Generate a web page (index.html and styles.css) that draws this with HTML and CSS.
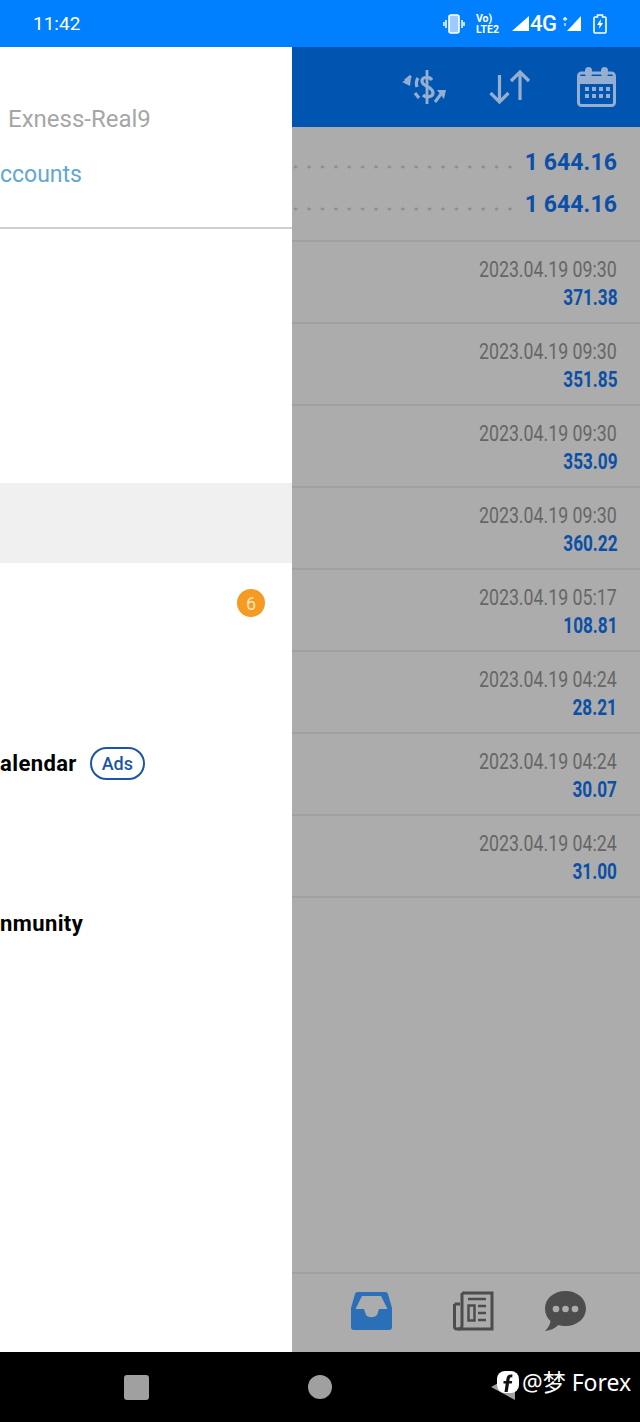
FILE: index.html
```html
<!DOCTYPE html>
<html lang="en">
<head>
<meta charset="utf-8">
<title>History</title>
<link rel="stylesheet" href="styles.css">
</head>
<body>
<div class="phone">
  <header class="status">
    <span class="clock">11:42</span>
    <div class="status-icons">
      <svg class="i-vibrate" viewBox="0 0 22 20"><rect x="6" y="1" width="10" height="18" rx="2" fill="#9ccbff" stroke="#fff" stroke-width="1.6"/><path d="M3 6v8M1 8v4M19 6v8M21 8v4" stroke="#fff" stroke-width="1.5" fill="none"/></svg>
      <div class="volte"><span>Vo)</span><span>LTE2</span></div>
      <svg class="i-signal" viewBox="0 0 17 15"><path d="M17 0V15H0Z" fill="#fff"/></svg>
      <span class="net">4G</span>
      <svg class="i-signal2" viewBox="0 0 19 15"><path d="M18 0V15H4Z" fill="#fff"/><path d="M2 2v3M0 3.500l2-2 2 2M2 10V7" stroke="#fff" stroke-width="1.2" fill="none"/></svg>
      <svg class="i-battery" viewBox="0 0 14 20"><path d="M4.500 1h5v2h2.500a1 1 0 0 1 1 1v14a1 1 0 0 1-1 1H2a1 1 0 0 1-1-1V4a1 1 0 0 1 1-1h2.500z" fill="none" stroke="#fff" stroke-width="1.6"/><path d="M8 5 4 11h2.500L6 15l4-6H7.500z" fill="#fff"/></svg>
    </div>
  </header>

  <div class="screen">
    <div class="main">
      <div class="appbar">
        <svg class="i-dollar" viewBox="0 0 44 34" fill="none" stroke="#96aecf" stroke-width="3.200">
          <path d="M30 10C27 6 20 7 20 11c0 6 11 5 11 12 0 4-7 5-10 2"/>
          <path d="M25 0v34" stroke-width="2.800"/>
          <path d="M16 8c-2 3-2 6-1 9M13 23l4 5"/>
          <path d="M9 6 3 11" stroke-width="3"/>
          <path d="M0 12l8 4 1-8z" fill="#96aecf" stroke="none"/>
          <path d="M33 32l6-8" stroke-width="3"/>
          <path d="M44 20h-9l7 9z" fill="#96aecf" stroke="none"/>
        </svg>
        <svg class="i-sort" viewBox="0 0 42 34" fill="none" stroke="#96aecf" stroke-width="3.200">
          <path d="M10.500 5v27M1.500 23l9 9 9-9"/>
          <path d="M31 30V2M22 11l9-9 9 9"/>
        </svg>
        <svg class="i-cal" viewBox="0 0 39 40">
          <rect x="1.500" y="6" width="36" height="32.500" rx="3" fill="none" stroke="#96aecf" stroke-width="3"/>
          <path d="M1.500 9h36v8h-36z" fill="#96aecf"/>
          <rect x="8" y="0" width="7" height="10" rx="3.500" fill="#96aecf"/>
          <rect x="24" y="0" width="7" height="10" rx="3.500" fill="#96aecf"/>
          <g fill="#96aecf"><rect x="8" y="20" width="4" height="4"/><rect x="15" y="20" width="4" height="4"/><rect x="22" y="20" width="4" height="4"/><rect x="29" y="20" width="4" height="4"/><rect x="8" y="27" width="4" height="4"/><rect x="15" y="27" width="4" height="4"/><rect x="22" y="27" width="4" height="4"/><rect x="29" y="27" width="4" height="4"/></g>
        </svg>
      </div>
      <section class="summary">
        <div class="sum-row"><span class="leader"></span><span class="sum-value">1 644.16</span></div>
        <div class="sum-row"><span class="leader"></span><span class="sum-value">1 644.16</span></div>
      </section>
      <ul class="deals">
        <li class="deal"><span class="deal-date">2023.04.19 09:30</span><span class="deal-amount">371.38</span></li>
        <li class="deal"><span class="deal-date">2023.04.19 09:30</span><span class="deal-amount">351.85</span></li>
        <li class="deal"><span class="deal-date">2023.04.19 09:30</span><span class="deal-amount">353.09</span></li>
        <li class="deal"><span class="deal-date">2023.04.19 09:30</span><span class="deal-amount">360.22</span></li>
        <li class="deal"><span class="deal-date">2023.04.19 05:17</span><span class="deal-amount">108.81</span></li>
        <li class="deal"><span class="deal-date">2023.04.19 04:24</span><span class="deal-amount">28.21</span></li>
        <li class="deal"><span class="deal-date">2023.04.19 04:24</span><span class="deal-amount">30.07</span></li>
        <li class="deal"><span class="deal-date">2023.04.19 04:24</span><span class="deal-amount">31.00</span></li>
      </ul>
      <nav class="tabs">
        <svg class="tab-icon" viewBox="0 0 41 38"><path fill-rule="evenodd" d="M7 0h27a3 3 0 0 1 3 2l4 14v19a3 3 0 0 1-3 3H3a3 3 0 0 1-3-3V16L4 2a3 3 0 0 1 3-2zM11 4 4.500 17H13l2 6c3 3 8 3 11 0l2-6h8.500L30 4z" fill="#2a6fb8"/></svg>
        <svg class="tab-icon tab-news" viewBox="0 0 41 40" fill="none" stroke="#4d4d4d" stroke-width="3">
          <path d="M9 2h30v36H4a2.500 2.500 0 0 1-2.500-2.500V13"/><path d="M9 2v33c0 2-2 3-4 3M1.500 13H7"/>
          <path d="M15 8h18" stroke-width="2.500"/>
          <rect x="15.500" y="14.500" width="6" height="15" stroke-width="2.500"/>
          <path d="M25 15h8M25 22h8M25 29h8" stroke-width="2.500"/>
        </svg>
        <svg class="tab-icon tab-chat" viewBox="0 0 41 40"><path d="M20.500 0C32 0 41 7.500 41 17.500S32 35 20.500 35c-2.500 0-5-.4-7-1C10 37.500 5 39.500 0 40c3-3 5-6 5.500-10C2 27 0 22.500 0 17.500 0 7.500 9 0 20.500 0z" fill="#4d4d4d"/><circle cx="11" cy="18" r="3.300" fill="#acacac"/><circle cx="20.500" cy="18" r="3.300" fill="#acacac"/><circle cx="30" cy="18" r="3.300" fill="#acacac"/></svg>
      </nav>
    </div>

    <aside class="drawer">
      <div class="drawer-head">
        <p class="server">Exness-Real9</p>
        <p class="accounts">ccounts</p>
      </div>
      <ul class="menu">
        <li class="menu-item"></li>
        <li class="menu-item"></li>
        <li class="menu-item"></li>
        <li class="menu-item is-active"></li>
        <li class="menu-item"><span class="badge">6</span></li>
        <li class="menu-item"></li>
        <li class="menu-item"><span class="menu-label">alendar</span><span class="ads">Ads</span></li>
        <li class="menu-item"></li>
        <li class="menu-item"><span class="menu-label">nmunity</span></li>
      </ul>
    </aside>
  </div>

  <footer class="navbar">
    <span class="nav-square"></span>
    <span class="nav-circle"></span>
    <svg class="nav-back" viewBox="0 0 24 26"><path d="M0 13 24 0v26z" fill="#a0a0a0"/></svg>
    <div class="watermark">
      <svg class="fb" viewBox="0 0 22 22"><rect width="22" height="22" rx="8" fill="#fff"/><path d="M15.500 3.500c-3.500-.6-5.500 1-6 4l-.4 2.500H6.500v2.500h2.200L7.500 21h3.200l1.300-8.500h2.800l.4-2.500h-2.800l.3-2c.2-1.300 1-1.800 2.500-1.600z" fill="#111"/></svg>
      <span>@梦 Forex</span>
    </div>
  </footer>
</div>
</body>
</html>
```

FILE: styles.css
```css
* { box-sizing: border-box; }
html, body { margin: 0; padding: 0; }
body { font-family: Roboto, "Noto Sans CJK SC", sans-serif; background: #000; }
ul { list-style: none; margin: 0; padding: 0; }
p { margin: 0; }
svg { display: block; flex: none; }

.phone { width: 640px; height: 1422px; display: flex; flex-direction: column; overflow: hidden; }

.status { height: 47px; flex: none; background: #0080ff; color: #fff; display: flex; align-items: center; justify-content: space-between; padding: 0 33px; }
.clock { font-size: 19px; line-height: 47px; }
.status-icons { display: flex; align-items: center; }
.i-vibrate { width: 22px; height: 20px; margin-right: 11px; }
.volte { display: flex; flex-direction: column; width: 25px; font-size: 10.500px; font-weight: 700; line-height: 11px; margin-right: 11px; }
.i-signal { width: 17px; height: 15px; }
.net { font-size: 22px; font-weight: 500; margin: 0 7px 0 1px; width: 26px; letter-spacing: -.4px; }
.i-signal2 { width: 19px; height: 15px; margin-right: 11px; }
.i-battery { width: 14px; height: 20px; }

.screen { flex: 1; position: relative; min-height: 0; }
.main { height: 100%; background: #acacac; display: flex; flex-direction: column; }

.appbar { height: 80px; flex: none; background: #0055b0; display: flex; align-items: center; padding-right: 24px; justify-content: flex-end; }
.i-dollar { width: 44px; height: 34px; margin-right: 43px; }
.i-sort { width: 42px; height: 34px; margin-right: 46px; }
.i-cal { width: 39px; height: 40px; }

.summary { height: 114.500px; flex: none; padding: 14px 23px 0 0; border-bottom: 2px solid #a0a0a0; }
.sum-row { height: 42px; display: flex; align-items: center; }
.leader { flex: 1; height: 4px; margin: 10px 8px 0 0; background: radial-gradient(circle, #8c8c8c 1.400px, transparent 1.700px) right 0 / 13.400px 4px repeat-x; }
.sum-value { font-size: 23px; font-weight: 700; color: #0b50a6; letter-spacing: .1px; }

.deals { flex: 1; }
.deal { height: 82px; border-bottom: 2px solid #a0a0a0; display: flex; flex-direction: column; align-items: flex-end; padding: 14.500px 23px 0 0; }
.deal-date { font-size: 22px; line-height: 28px; color: #666; transform: scaleX(.807); transform-origin: right center; }
.deal-amount { font-size: 22px; font-weight: 700; line-height: 28px; color: #0b50a6; transform: scaleX(.78); transform-origin: right center; }

.tabs { height: 80.500px; flex: none; border-top: 2px solid #a0a0a0; display: flex; align-items: center; padding: 0 54px 4px 351px; }
.tab-icon { width: 41px; height: 40px; }
.tab-news { margin-left: 61px; }
.tab-chat { margin-left: 51px; }

.drawer { position: absolute; top: 0; bottom: 0; left: 0; width: 292px; background: #fff; }
.drawer-head { height: 182px; border-bottom: 2px solid #cfcfcf; font-size: 24px; line-height: 30px; padding-top: 57px; }
.server { color: #a6a6a6; padding-left: 8px; }
.accounts { color: #62a7d2; margin-top: 26px; font-size: 23px; }
.menu { padding-top: 14px; }
.menu-item { height: 80px; display: flex; align-items: center; }
.is-active { background: #f0f0f0; }
.menu-label { font-size: 22px; font-weight: 700; color: #000; letter-spacing: .4px; }
.ads { margin-left: 13px; width: 55px; height: 33px; border: 2px solid #1d55a5; border-radius: 17px; color: #1d55a5; font-size: 18px; font-weight: 500; display: flex; align-items: center; justify-content: center; }
.badge { margin-left: 237px; width: 28px; height: 28px; border-radius: 50%; background: #f59a23; color: #fde3bb; font-size: 18px; display: flex; align-items: center; justify-content: center; }

.navbar { height: 70px; flex: none; background: #000; position: relative; display: flex; align-items: center; padding-left: 124px; }
.nav-square { width: 25px; height: 25px; border-radius: 3px; background: #a0a0a0; }
.nav-circle { width: 24px; height: 24px; border-radius: 50%; background: #a0a0a0; margin-left: 159px; }
.nav-back { width: 24px; height: 26px; margin-left: 159px; }
.watermark { position: absolute; left: 497px; top: 15px; display: flex; align-items: center; gap: 3px; color: #fff; font-family: "Noto Sans", "Noto Sans CJK SC", sans-serif; font-size: 23px; line-height: 30px; }
.fb { width: 22px; height: 22px; }
```
